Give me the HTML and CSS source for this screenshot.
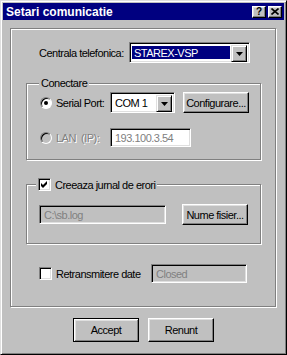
FILE: index.html
```html
<!DOCTYPE html>
<html lang="ro">
<head>
  <meta charset="UTF-8">
  <title>Setari comunicatie</title>
  <link rel="stylesheet" href="styles.css">
</head>
<body>
  <div class="window">
    <div class="titlebar">
      <span class="title">Setari comunicatie</span>
      <div class="title-btns">
        <span class="tbtn help">?</span>
        <span class="tbtn close">
          <svg width="8" height="7" viewBox="0 0 8 7"><path d="M0.5 0.5 L7.5 6.5 M7.5 0.5 L0.5 6.5" stroke="#000" stroke-width="1.6"/></svg>
        </span>
      </div>
    </div>

    <div class="content">
      <div class="panel">
        <div class="row-central">
          <span class="central-label">Centrala telefonica:</span>
          <div class="combo central">
            <span class="value">STAREX-VSP</span>
            <span class="drop"><svg width="7" height="4" viewBox="0 0 7 4"><polygon points="0,0 7,0 3.5,4" fill="#000"/></svg></span>
          </div>
        </div>

        <fieldset class="group conectare">
          <legend>Conectare</legend>
          <div class="opt-row">
            <span class="opt"><span class="radio checked"></span>Serial Port:</span>
            <div class="combo com">
              <span class="value">COM 1</span>
              <span class="drop"><svg width="7" height="4" viewBox="0 0 7 4"><polygon points="0,0 7,0 3.5,4" fill="#000"/></svg></span>
            </div>
            <span class="btn config">Configurare...</span>
          </div>
          <div class="opt-row lan">
            <span class="opt disabled"><span class="radio off"></span>LAN &nbsp;(IP):</span>
            <span class="field ip">193.100.3.54</span>
          </div>
        </fieldset>

        <fieldset class="group jurnal">
          <legend><span class="check on"><svg width="7" height="7" viewBox="0 0 7 7"><path d="M0 2 L2 4 L6 0 L6 3 L2 7 L0 5 Z" fill="#000"/></svg></span>Creeaza jurnal de erori</legend>
          <div class="file-row">
            <span class="field path">C:\sb.log</span>
            <span class="btn nume">Nume fisier...</span>
          </div>
        </fieldset>

        <div class="row-retrans">
          <span class="retrans-label"><span class="check"></span>Retransmitere date</span>
          <span class="field closed">Closed</span>
        </div>
      </div>

      <div class="actions">
        <span class="btn action default">Accept</span>
        <span class="btn action">Renunt</span>
      </div>
    </div>
  </div>
</body>
</html>
```

FILE: styles.css
```css
* {
  box-sizing: border-box;
}
body {
  margin: 0;
  background-color: #c0c0c0;
  font-family: "Liberation Sans", Arial, sans-serif;
  font-size: 11px;
  letter-spacing: -0.5px;
  color: #000;
}
.window {
  width: 287px;
  height: 355px;
  background-color: #c0c0c0;
  border: 1px solid;
  border-color: #dfdfdf #000 #000 #dfdfdf;
  box-shadow: inset 1px 1px 0 #fff, inset -1px -1px 0 #808080;
  padding: 2px;
  display: flex;
  flex-direction: column;
}
.titlebar {
  height: 17px;
  background-color: #000080;
  color: #fff;
  display: flex;
  align-items: center;
  justify-content: space-between;
  padding: 0 2px 0 3px;
}
.title {
  font-weight: bold;
  font-size: 12px;
  letter-spacing: 0;
}
.title-btns {
  display: flex;
  gap: 2px;
}
.tbtn {
  width: 14px;
  height: 12px;
  background-color: #c0c0c0;
  border: 1px solid;
  border-color: #fff #000 #000 #fff;
  box-shadow: inset -1px -1px 0 #808080, inset 1px 1px 0 #dfdfdf;
  color: #000;
  font-weight: bold;
  font-size: 10px;
  line-height: 10px;
  letter-spacing: 0;
  display: flex;
  align-items: center;
  justify-content: center;
}
.content {
  padding: 8px 7px 0;
}
.panel {
  width: 266px;
  height: 279px;
  border: 1px solid #808080;
  box-shadow: 1px 1px 0 #fff, inset 1px 1px 0 #fff;
  padding-top: 13px;
}

/* controls */
.combo, .field {
  border: 1px solid;
  border-color: #808080 #fff #fff #808080;
  box-shadow: inset 1px 1px 0 #000, inset -1px -1px 0 #dfdfdf;
}
.combo {
  display: flex;
  height: 21px;
  padding: 2px;
  background-color: #fff;
}
.combo .value {
  flex: 1;
  display: flex;
  align-items: center;
  padding-left: 2px;
}
.combo .drop {
  width: 16px;
  height: 17px;
  background-color: #c0c0c0;
  border: 1px solid;
  border-color: #dfdfdf #000 #000 #dfdfdf;
  box-shadow: inset 1px 1px 0 #fff, inset -1px -1px 0 #808080;
  display: flex;
  align-items: center;
  justify-content: center;
}
.field {
  display: flex;
  align-items: center;
  height: 19px;
  padding-left: 4px;
  color: #808080;
  background-color: #c0c0c0;
}
.btn {
  display: flex;
  align-items: center;
  justify-content: center;
  width: 66px;
  height: 21px;
  background-color: #c0c0c0;
  border: 1px solid;
  border-color: #fff #000 #000 #fff;
  box-shadow: inset -1px -1px 0 #808080, inset 1px 1px 0 #dfdfdf;
}
.radio {
  width: 12px;
  height: 12px;
  border-radius: 50%;
  background-color: #fff;
  border: 1px solid;
  border-color: #808080 #fff #fff #808080;
  box-shadow: inset 1px 1px 0 #000;
  margin-right: 4px;
  position: relative;
}
.radio.checked::after {
  content: "";
  position: absolute;
  left: 3px;
  top: 3px;
  width: 4px;
  height: 4px;
  border-radius: 50%;
  background-color: #000;
}
.radio.off {
  background-color: #c0c0c0;
}
.check {
  width: 13px;
  height: 13px;
  background-color: #fff;
  border: 1px solid;
  border-color: #808080 #fff #fff #808080;
  box-shadow: inset 1px 1px 0 #000, inset -1px -1px 0 #dfdfdf;
  margin-right: 4px;
  display: inline-flex;
  align-items: center;
  justify-content: center;
  flex-shrink: 0;
}
.disabled {
  color: #808080;
  text-shadow: 1px 1px 0 #fff;
}

/* centrala */
.row-central {
  display: flex;
  align-items: center;
  padding-left: 28px;
}
.central-label {
  width: 90px;
}
.combo.central {
  width: 121px;
}
.combo.central .value {
  background-color: #000080;
  color: #fff;
  margin: 1px 1px 1px 0;
}

/* groups */
.group {
  margin: 14px 0 0 15px;
  width: 235px;
  border: 1px solid #808080;
  box-shadow: 1px 1px 0 #fff, inset 1px 1px 0 #fff;
  padding: 3px 0 12px 13px;
  min-width: 0;
}
.group legend {
  padding: 0 2px;
  margin-left: -1px;
  line-height: 12px;
  background-color: #c0c0c0;
  display: flex;
  align-items: center;
}
.opt-row {
  display: flex;
  align-items: center;
  height: 21px;
}
.opt {
  width: 70px;
  display: flex;
  align-items: center;
}
.combo.com {
  width: 65px;
}
.btn.config {
  margin-left: 8px;
}
.opt-row.lan {
  margin-top: 15px;
  height: 19px;
}
.field.ip {
  width: 81px;
  background-color: #fff;
}
.group.jurnal {
  margin-top: 18px;
  padding: 13px 0 18px 12px;
}
.jurnal legend {
  margin-left: -3px;
}
.file-row {
  display: flex;
  align-items: center;
}
.field.path {
  width: 127px;
}
.btn.nume {
  margin-left: 16px;
}

/* retransmitere */
.row-retrans {
  display: flex;
  align-items: center;
  margin-top: 20px;
  padding-left: 28px;
}
.retrans-label {
  width: 112px;
  display: flex;
  align-items: center;
}
.field.closed {
  width: 96px;
}

/* actions */
.actions {
  display: flex;
  justify-content: center;
  gap: 9px;
  margin-top: 11px;
}
.btn.action {
  height: 24px;
}
.btn.default {
  border-color: #000;
  box-shadow: inset 1px 1px 0 #fff, inset -1px -1px 0 #808080, inset 2px 2px 0 #dfdfdf;
}
```
